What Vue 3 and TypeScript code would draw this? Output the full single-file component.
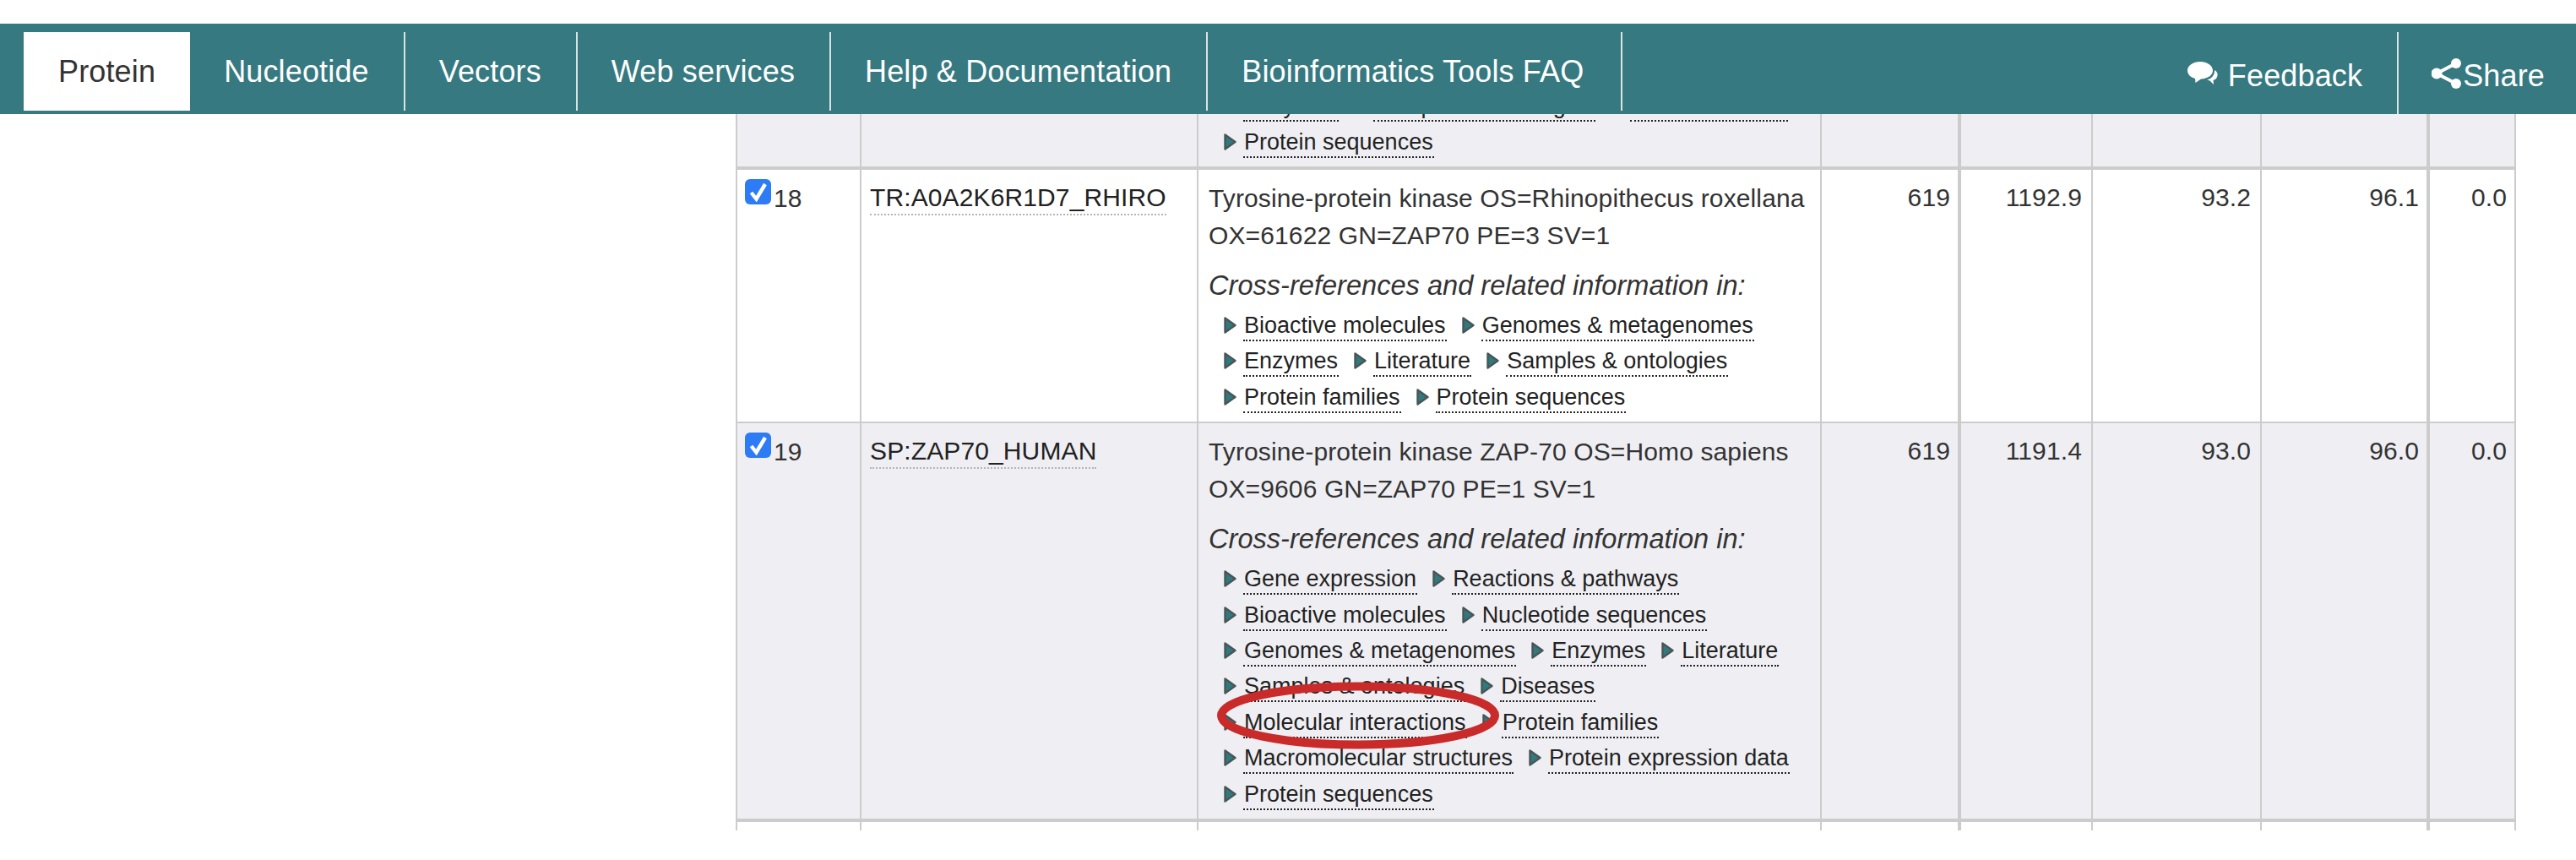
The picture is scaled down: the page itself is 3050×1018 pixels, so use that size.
<script setup lang="ts">
interface Row {
  n: string
  id: string
  desc: string[]
  links: string[]
  len: string
  bits: string
  ident: string
  sim: string
  ev: string
}
const tabs = ['Protein', 'Nucleotide', 'Vectors', 'Web services', 'Help & Documentation', 'Bioinformatics Tools FAQ']
const clippedLinks = ['Enzymes', 'Samples & ontologies', 'Protein families', 'Protein sequences']
const rows: Row[] = [
  {
    n: '18',
    id: 'TR:A0A2K6R1D7_RHIRO',
    desc: ['Tyrosine-protein kinase OS=Rhinopithecus roxellana', 'OX=61622 GN=ZAP70 PE=3 SV=1'],
    links: ['Bioactive molecules', 'Genomes & metagenomes', 'Enzymes', 'Literature', 'Samples & ontologies', 'Protein families', 'Protein sequences'],
    len: '619', bits: '1192.9', ident: '93.2', sim: '96.1', ev: '0.0'
  },
  {
    n: '19',
    id: 'SP:ZAP70_HUMAN',
    desc: ['Tyrosine-protein kinase ZAP-70 OS=Homo sapiens', 'OX=9606 GN=ZAP70 PE=1 SV=1'],
    links: ['Gene expression', 'Reactions & pathways', 'Bioactive molecules', 'Nucleotide sequences', 'Genomes & metagenomes', 'Enzymes', 'Literature', 'Samples & ontologies', 'Diseases', 'Molecular interactions', 'Protein families', 'Macromolecular structures', 'Protein expression data', 'Protein sequences'],
    len: '619', bits: '1191.4', ident: '93.0', sim: '96.0', ev: '0.0'
  }
]
const widths = [149, 399, 738, 165, 156, 200, 199, 102]
</script>

<template>
  <div class="page">
    <nav class="nav">
      <a v-for="(t, i) in tabs" :key="t" class="tab" :class="{ active: i === 0 }">{{ t }}</a>
      <div class="right">
        <a class="rlink feedback">
          <svg class="fb-icon" width="36" height="27" viewBox="0 0 36 27" aria-hidden="true">
            <path fill="#fff" d="M15 0C23 0 30 4.500 30 10.500C30 16 24 20 16 20.500L9.500 25L9 20C3.500 18.500 0 15 0 10.500C0 4.500 7 0 15 0Z" />
            <path fill="#fff" d="M32 10C35 11.500 36 14 35.500 16.500C35 19.500 33 21.500 30.500 22L31 27L26.500 22.500L23 21.500C28 20.500 32.500 16 32 10Z" />
          </svg>
          Feedback
        </a>
        <a class="rlink share">
          <svg class="sh-icon" width="35" height="36" viewBox="0 0 35 36" aria-hidden="true">
            <path fill="none" stroke="#fff" stroke-width="4" d="M29 6L6 18L29 30" />
            <circle cx="29" cy="6" r="6" fill="#fff" />
            <circle cx="6" cy="18" r="6.500" fill="#fff" />
            <circle cx="29" cy="30" r="6" fill="#fff" />
          </svg>Share
        </a>
      </div>
    </nav>

    <div class="results">
      <table class="grid">
        <colgroup>
          <col v-for="(w, i) in widths" :key="i" :style="{ width: w + 'px' }" />
        </colgroup>
        <tbody>
          <tr class="alt thick">
            <td></td>
            <td></td>
            <td class="info">
              <div class="links">
                <span v-for="l in clippedLinks" :key="l" class="item">
                  <svg class="tri" width="15" height="20" viewBox="0 0 15 20" aria-hidden="true">
                    <path d="M1.500 1.500L13.500 10L1.500 18.500Z" fill="#2f7a7e" stroke="#4a5557" stroke-width="2.400" stroke-linejoin="round" />
                  </svg>
                  <span class="lbl">{{ l }}</span>
                </span>
              </div>
            </td>
            <td></td><td></td><td></td><td></td><td></td>
          </tr>
          <tr v-for="(r, ri) in rows" :key="r.n" :class="{ alt: ri === 1, thick: ri === 1 }">
            <td class="num">
              <span class="check">
                <svg width="24" height="24" viewBox="0 0 24 24" aria-hidden="true">
                  <path d="M3.500 13L9.500 20.500L20 3" fill="none" stroke="#fff" stroke-width="4.400" />
                </svg>
              </span>{{ r.n }}
            </td>
            <td class="acc"><span class="acc-id">{{ r.id }}</span></td>
            <td class="info">
              <div class="desc">{{ r.desc[0] }}<br />{{ r.desc[1] }}</div>
              <div class="xref">Cross-references and related information in:</div>
              <div class="links">
                <span v-for="l in r.links" :key="l" class="item">
                  <svg class="tri" width="15" height="20" viewBox="0 0 15 20" aria-hidden="true">
                    <path d="M1.500 1.500L13.500 10L1.500 18.500Z" fill="#2f7a7e" stroke="#4a5557" stroke-width="2.400" stroke-linejoin="round" />
                  </svg>
                  <span class="lbl">{{ l }}</span>
                  <svg v-if="l === 'Molecular interactions'" class="ring" width="334" height="80" viewBox="0 0 334 80" aria-hidden="true">
                    <ellipse cx="167" cy="40" rx="162" ry="34.500" fill="none" stroke="#c92a2a" stroke-width="10" />
                  </svg>
                </span>
              </div>
            </td>
            <td class="val">{{ r.len }}</td>
            <td class="val">{{ r.bits }}</td>
            <td class="val">{{ r.ident }}</td>
            <td class="val">{{ r.sim }}</td>
            <td class="val">{{ r.ev }}</td>
          </tr>
          <tr class="tail">
            <td></td><td></td><td></td><td></td><td></td><td></td><td></td><td></td>
          </tr>
        </tbody>
      </table>
    </div>
  </div>
</template>

<style scoped>
.page {
  width: 3050px;
  height: 1018px;
  padding-top: 28px;
  box-sizing: border-box;
  background: #fff;
  overflow: hidden;
  font-family: "Liberation Sans", Arial, sans-serif;
  color: #333;
}
.nav {
  height: 107px;
  box-sizing: border-box;
  padding: 10px 37px 4px 28px;
  background: #367980;
  display: flex;
  align-items: stretch;
  font-size: 36px;
  letter-spacing: 0.150px;
  color: #fff;
  position: relative;
  z-index: 2;
}
.tab {
  display: flex;
  align-items: center;
  padding: 0 41px 0 40px;
  border-right: 2px solid #d9e4e5;
}
.tab:nth-child(6) {
  padding-right: 44px;
}
.tab.active {
  background: #fff;
  color: #333;
  padding: 0 41px;
  border-right: 0;
}
.right {
  margin-left: auto;
  margin-bottom: -4px;
  display: flex;
  align-items: stretch;
}
.rlink {
  display: flex;
  align-items: center;
  padding-top: 6px;
  box-sizing: border-box;
}
.feedback {
  padding-right: 41px;
  border-right: 2px solid #d9e4e5;
}
.fb-icon {
  margin-right: 12px;
  margin-top: -6px;
}
.share {
  padding-left: 39px;
}
.sh-icon {
  margin-right: 2px;
  margin-top: -5px;
}
.results {
  margin-left: 871px;
  width: 2108px;
  height: 848px;
  overflow: hidden;
}
.grid {
  table-layout: fixed;
  width: 2108px;
  border-collapse: separate;
  border-spacing: 0;
  margin-top: -46.800px;
  font-size: 30px;
  line-height: 44px;
  letter-spacing: 0.120px;
}
td {
  padding: 0;
  vertical-align: top;
  border-right: 2px solid #ccc;
  border-bottom: 2px solid #ccc;
  box-sizing: border-box;
}
td:first-child {
  border-left: 2px solid #ccc;
}
td:nth-child(4),
td:nth-child(7) {
  border-right-width: 4px;
}
tr.alt td {
  background: #efeff3;
}
tr.thick td {
  border-bottom-width: 4px;
}
.num {
  padding: 11px 0 0 9px;
  white-space: nowrap;
}
.check {
  display: inline-flex;
  align-items: center;
  justify-content: center;
  width: 31px;
  height: 30px;
  border-radius: 6px;
  background: #2e7bf6;
  margin-right: 3px;
  vertical-align: 6px;
}
.acc {
  padding: 11px 0 0 10px;
  color: #222;
}
.acc-id {
  display: inline-block;
  line-height: 38px;
  border-bottom: 2px dotted #b5b5b5;
}
.info {
  padding: 12px 12px 3px;
}
.desc {
  color: #333;
}
.xref {
  margin-top: 15px;
  font-style: italic;
  font-size: 32.600px;
  letter-spacing: 0;
}
.links {
  display: flex;
  flex-wrap: wrap;
  column-gap: 18px;
  padding-left: 18px;
  font-size: 27px;
  letter-spacing: 0;
  color: #222;
  margin-top: 9px;
}
.item {
  position: relative;
  display: inline-flex;
  align-items: flex-start;
  height: 42.400px;
  white-space: nowrap;
}
.tri {
  margin-top: 6px;
  margin-right: 8px;
  flex: none;
}
.lbl {
  line-height: 33px;
  border-bottom: 2px dotted #222;
  padding: 0 1px;
}
.ring {
  position: absolute;
  left: -8px;
  top: -31.600px;
  z-index: 1;
}
.val {
  text-align: right;
  padding: 11px 9px 0 0;
}
td:nth-child(5).val,
td:nth-child(6).val {
  padding-right: 11px;
}
tr.tail td {
  height: 40px;
  background: #fff;
}
</style>

<style>
html, body {
  margin: 0;
  background: #fff;
}
</style>
